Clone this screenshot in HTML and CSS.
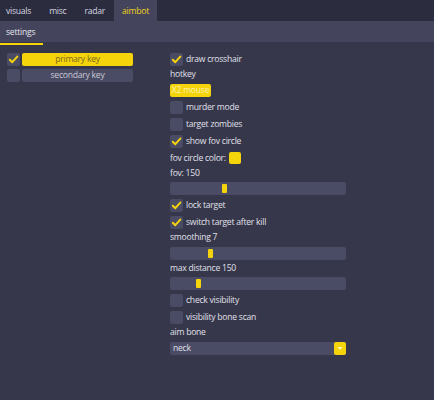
FILE: index.html
```html
<!DOCTYPE html>
<html>
<head>
<meta charset="utf-8">
<link rel="stylesheet" href="styles.css">
</head>
<body>
<div class="app">
  <nav class="tabs">
    <div class="tab first">visuals</div>
    <div class="tab">misc</div>
    <div class="tab">radar</div>
    <div class="tab active">aimbot</div>
  </nav>
  <div class="subnav">
    <div class="subtab">settings</div>
  </div>
  <div class="indicator"></div>
  <main class="content">
    <section class="col-left">
      <div class="row">
        <span class="cb checked"><svg viewBox="0 0 13 13"><path d="M2.8 6.8 L5.3 9.2 L10.3 3.6" /></svg></span>
        <button class="keybtn on">primary key</button>
      </div>
      <div class="row">
        <span class="cb"></span>
        <button class="keybtn">secondary key</button>
      </div>
    </section>
    <section class="col-right">
      <div class="row"><span class="cb checked"><svg viewBox="0 0 13 13"><path d="M2.8 6.8 L5.3 9.2 L10.3 3.6" /></svg></span><span class="lbl">draw crosshair</span></div>
      <div class="label">hotkey</div>
      <div class="row"><button class="hotkey">X2 mouse</button></div>
      <div class="row"><span class="cb"></span><span class="lbl">murder mode</span></div>
      <div class="row"><span class="cb"></span><span class="lbl">target zombies</span></div>
      <div class="row"><span class="cb checked"><svg viewBox="0 0 13 13"><path d="M2.8 6.8 L5.3 9.2 L10.3 3.6" /></svg></span><span class="lbl">show fov circle</span></div>
      <div class="row"><span class="lbl plain">fov circle color:</span><span class="swatch"></span></div>
      <div class="label">fov: 150</div>
      <div class="slider"><span class="thumb" style="left:52px"></span></div>
      <div class="row"><span class="cb checked"><svg viewBox="0 0 13 13"><path d="M2.8 6.8 L5.3 9.2 L10.3 3.6" /></svg></span><span class="lbl">lock target</span></div>
      <div class="row"><span class="cb checked"><svg viewBox="0 0 13 13"><path d="M2.8 6.8 L5.3 9.2 L10.3 3.6" /></svg></span><span class="lbl">switch target after kill</span></div>
      <div class="label">smoothing 7</div>
      <div class="slider"><span class="thumb" style="left:38px"></span></div>
      <div class="label">max distance 150</div>
      <div class="slider"><span class="thumb" style="left:26px"></span></div>
      <div class="row"><span class="cb"></span><span class="lbl">check visibility</span></div>
      <div class="row"><span class="cb"></span><span class="lbl">visibility bone scan</span></div>
      <div class="label">aim bone</div>
      <div class="combo"><span class="combo-val">neck</span><span class="combo-arrow"><svg viewBox="0 0 12 13"><path d="M3.5 5 L8.5 5 L6 8 Z" /></svg></span></div>
    </section>
  </main>
</div>
</body>
</html>
```

FILE: styles.css
```css
html, body {
  margin: 0;
  padding: 0;
  background: #36374a;
}
body {
  font-family: "Open Sans", "Liberation Sans", sans-serif;
  font-size: 8.6px;
  letter-spacing: -0.25px;
  color: #e0e0ea;
}
.app {
  width: 434px;
  height: 400px;
  background: #36374a;
}
.tabs {
  display: flex;
  height: 21px;
  background: #2b2c3e;
}
.tab {
  display: flex;
  align-items: center;
  padding: 0 9px;
  color: #d6d6e0;
}
.tab.first {
  padding-left: 6px;
}
.tab.active {
  background: #44455c;
  color: #f3d21a;
  padding: 0 8px;
}
.subnav {
  display: flex;
  height: 21px;
  background: #44455c;
}
.subtab {
  display: flex;
  align-items: center;
  padding: 0 6px;
  color: #e4e4ee;
}
.indicator {
  width: 43px;
  height: 2px;
  margin-top: 1px;
  background: #f6d40c;
}
.content {
  display: grid;
  grid-template-columns: 163px 176px;
  padding: 8px 0 0 7px;
}
.col-left, .col-right {
  display: flex;
  flex-direction: column;
  gap: 4px;
}
.col-left {
  gap: 3px;
}
.row {
  display: flex;
  align-items: center;
  height: 13px;
}
.cb {
  width: 13px;
  height: 13px;
  border-radius: 2px;
  background: #4a4b64;
  flex: none;
  display: flex;
}
.cb svg {
  width: 13px;
  height: 13px;
}
.cb svg path {
  fill: none;
  stroke: #f6d40c;
  stroke-width: 2;
  stroke-linecap: round;
  stroke-linejoin: round;
}
.lbl {
  margin-left: 3px;
  line-height: 13px;
  white-space: nowrap;
}
.lbl.plain {
  margin-left: 0;
}
.keybtn {
  margin-left: 2px;
  width: 111px;
  height: 13px;
  border: 0;
  padding: 0;
  border-radius: 2px;
  background: #4a4b64;
  color: #c9c9d6;
  font: inherit;
  letter-spacing: inherit;
  line-height: 13px;
}
.keybtn.on {
  background: #f6d40c;
  color: #7a6a1e;
}
.label {
  height: 9.5px;
  line-height: 9.5px;
  white-space: nowrap;
}
.hotkey {
  width: 41px;
  height: 13px;
  border: 0;
  padding: 0;
  border-radius: 2px;
  background: #f6d40c;
  color: #fbf1b0;
  font: inherit;
  letter-spacing: inherit;
  line-height: 13px;
}
.swatch {
  width: 12px;
  height: 12px;
  margin-left: 3px;
  border-radius: 2px;
  background: #f6d40c;
}
.slider {
  position: relative;
  width: 176px;
  height: 13px;
  border-radius: 2px;
  background: #4a4b64;
}
.thumb {
  position: absolute;
  top: 2px;
  width: 5px;
  height: 9px;
  border-radius: 1px;
  background: #f6d40c;
}
.combo {
  display: flex;
  align-items: center;
  width: 176px;
  height: 13px;
  border-radius: 2px;
  background: #4a4b64;
}
.combo-val {
  flex: 1;
  padding-left: 3px;
  line-height: 13px;
}
.combo-arrow {
  width: 12px;
  height: 13px;
  border-radius: 2px;
  background: #f6d40c;
  display: flex;
}
.combo-arrow svg {
  width: 12px;
  height: 13px;
}
.combo-arrow svg path {
  fill: #fff6c0;
}
```
